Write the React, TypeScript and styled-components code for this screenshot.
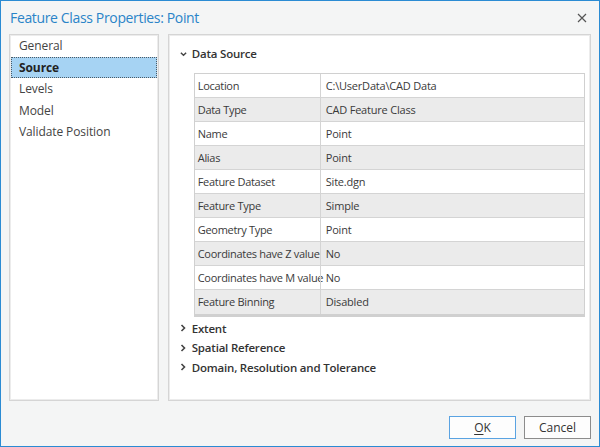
import styled, { createGlobalStyle } from "styled-components";

const GlobalStyle = createGlobalStyle`
  html, body {
    margin: 0;
    padding: 0;
    background: #f4f5f5;
  }
  * {
    box-sizing: border-box;
  }
`;

const Window = styled.div`
  width: 600px;
  height: 447px;
  border: 1px solid #2b8bd3;
  background: #f4f5f5;
  display: flex;
  flex-direction: column;
  font-family: "Open Sans", "Noto Sans", sans-serif;
  color: #333;
`;

const TitleBar = styled.div`
  height: 33px;
  display: flex;
  align-items: center;
  justify-content: space-between;
  padding: 0 10px 0 9px;
`;

const Title = styled.div`
  font-size: 14px;
  color: #2a84c8;
  letter-spacing: -0.35px;
`;

const CloseButton = styled.div`
  width: 14px;
  height: 14px;
  display: flex;
  align-items: center;
  justify-content: center;
`;

const Body = styled.div`
  display: flex;
  gap: 9px;
  padding: 0 8px;
  height: 367px;
`;

const Panel = styled.div<{ $width: number }>`
  width: ${(p) => p.$width}px;
  background: #fff;
  border: 1px solid #d5d5d5;
  box-shadow: inset 0 0 0 1px #ececec;
`;

const NavList = styled.div`
  padding: 0 1px;
  display: flex;
  flex-direction: column;
`;

const NavItem = styled.div<{ $active?: boolean }>`
  height: 21.5px;
  display: flex;
  align-items: center;
  padding-left: 7px;
  font-size: 12px;
  letter-spacing: -0.1px;
  color: ${(p) => (p.$active ? "#222" : "#444")};
  font-weight: ${(p) => (p.$active ? 700 : 400)};
  background: ${(p) => (p.$active ? "#a6d3f3" : "transparent")};
  border: 1px dotted ${(p) => (p.$active ? "#4a5a66" : "transparent")};
`;

const Content = styled.div`
  padding: 9px 5px 0 11px;
`;

const SectionHeader = styled.div`
  height: 19.5px;
  display: flex;
  align-items: center;
  gap: 5px;
  font-size: 11.5px;
  font-weight: 600;
  letter-spacing: -0.2px;
  color: #333;
`;

const Chevron = styled.span`
  width: 7px;
  display: flex;
  justify-content: center;
`;

const Table = styled.div`
  margin: 9px 0 2px 14px;
  border: 1px solid #d0d0d0;
  border-bottom-width: 3px;
  background: #ebebeb;
`;

const Row = styled.div<{ $shaded: boolean }>`
  display: grid;
  grid-template-columns: 125px 1fr;
  height: 24px;
  background: ${(p) => (p.$shaded ? "#ebebeb" : "#fff")};
  border-bottom: 1px solid #d4d4d4;
  &:last-child {
    border-bottom: none;
  }
`;

const Cell = styled.div`
  display: flex;
  align-items: center;
  padding-left: 3px;
  font-size: 11px;
  letter-spacing: -0.3px;
  color: #3a3a3a;
  white-space: nowrap;
  & + & {
    border-left: 1px solid #d4d4d4;
    padding-left: 5px;
    letter-spacing: -0.2px;
  }
`;

const Footer = styled.div`
  flex: 1;
  display: flex;
  justify-content: flex-end;
  align-items: flex-start;
  gap: 8px;
  padding: 15px 8px 0 0;
`;

const Button = styled.button<{ $primary?: boolean }>`
  width: 67px;
  height: 23px;
  background: #fdfdfd;
  border: 1px solid ${(p) => (p.$primary ? "#5aa3e2" : "#8c8c8c")};
  font-family: "Open Sans", "Noto Sans", sans-serif;
  font-size: 12px;
  color: #333;
  padding: 0;
  u {
    text-decoration-thickness: 1px;
    text-underline-offset: 2px;
  }
`;

const rows: [string, string][] = [
  ["Location", "C:\\UserData\\CAD Data"],
  ["Data Type", "CAD Feature Class"],
  ["Name", "Point"],
  ["Alias", "Point"],
  ["Feature Dataset", "Site.dgn"],
  ["Feature Type", "Simple"],
  ["Geometry Type", "Point"],
  ["Coordinates have Z value", "No"],
  ["Coordinates have M value", "No"],
  ["Feature Binning", "Disabled"],
];

const navItems = ["General", "Source", "Levels", "Model", "Validate Position"];

const ChevronDown = () => (
  <svg width="8" height="6" viewBox="0 0 8 6">
    <polyline points="1,1.5 4,4.5 7,1.5" fill="none" stroke="#444" strokeWidth="1.6" />
  </svg>
);

const ChevronRight = () => (
  <svg width="6" height="8" viewBox="0 0 6 8">
    <polyline points="1.5,1 4.5,4 1.5,7" fill="none" stroke="#444" strokeWidth="1.6" />
  </svg>
);

export default function App() {
  return (
    <>
      <GlobalStyle />
      <Window>
        <TitleBar>
          <Title>Feature Class Properties: Point</Title>
          <CloseButton>
            <svg width="10" height="10" viewBox="0 0 10 10">
              <path d="M1 1 L9 9 M9 1 L1 9" stroke="#555" strokeWidth="1.2" />
            </svg>
          </CloseButton>
        </TitleBar>
        <Body>
          <Panel $width={150}>
            <NavList>
              {navItems.map((item) => (
                <NavItem key={item} $active={item === "Source"}>
                  {item}
                </NavItem>
              ))}
            </NavList>
          </Panel>
          <Panel $width={424}>
            <Content>
              <SectionHeader>
                <Chevron>
                  <ChevronDown />
                </Chevron>
                Data Source
              </SectionHeader>
              <Table>
                {rows.map(([label, value], i) => (
                  <Row key={label} $shaded={i % 2 === 1}>
                    <Cell>{label}</Cell>
                    <Cell>{value}</Cell>
                  </Row>
                ))}
              </Table>
              {["Extent", "Spatial Reference", "Domain, Resolution and Tolerance"].map((s) => (
                <SectionHeader key={s}>
                  <Chevron>
                    <ChevronRight />
                  </Chevron>
                  {s}
                </SectionHeader>
              ))}
            </Content>
          </Panel>
        </Body>
        <Footer>
          <Button $primary>
            <u>O</u>K
          </Button>
          <Button>Cancel</Button>
        </Footer>
      </Window>
    </>
  );
}
